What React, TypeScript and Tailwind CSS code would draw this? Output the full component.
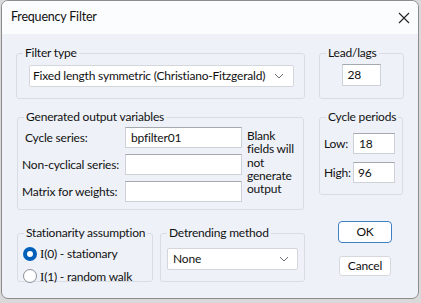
import React from 'react';

const font = "font-['Lato','Liberation_Sans',Arial,sans-serif]";

const Chevron = () => (
  <svg width="10" height="6" viewBox="0 0 10 6" className="shrink-0">
    <path d="M1 1l4 4 4-4" fill="none" stroke="#6b6f75" strokeWidth="1" />
  </svg>
);

const TextBox = ({ value = '', className = '' }: { value?: string; className?: string }) => (
  <div className={`bg-white border border-[#cdd2d8] border-t-[#a4a9b0] flex items-center pl-[4px] whitespace-nowrap ${className}`}>
    {value}
  </div>
);

const Select = ({ value, className = '' }: { value: string; className?: string }) => (
  <div className={`bg-white border border-[#d3d7dc] rounded-[2px] flex items-center justify-between pl-[3px] pr-[5px] whitespace-nowrap ${className}`}>
    <span>{value}</span>
    <Chevron />
  </div>
);

const Group = ({ title, className = '', children }: { title: string; className?: string; children: React.ReactNode }) => (
  <fieldset className={`border border-[#d8dde4] rounded-[3px] pl-[6px] ${className}`}>
    <legend className="px-[2px] leading-[16px] whitespace-nowrap">{title}</legend>
    {children}
  </fieldset>
);

export default function App() {
  return (
    <div className={`w-[421px] h-[303px] bg-[#d9d9d9] pl-[1px] pr-[2px] pb-[4px] ${font} text-[12px] tracking-[-0.2px] text-[#111]`}>
      <div className="w-full h-full flex flex-col rounded-[7px] border border-[#8c8c8c] overflow-hidden bg-[#eef2f8]">
        {/* title bar */}
        <div className="h-[33px] bg-[#fbfcfd] flex items-center justify-between pl-[9px] pr-[8px] shrink-0">
          <span className="text-[12.5px]">Frequency Filter</span>
          <svg width="12" height="12" viewBox="0 0 12 12">
            <path d="M1 1l10 10M11 1L1 11" stroke="#222" strokeWidth="1.1" />
          </svg>
        </div>

        <div className="flex-1 pl-[14px] pt-[11px] flex flex-col">
          {/* row 1 */}
          <div className="flex gap-[14px]">
            <Group title="Filter type" className="w-[289px] h-[54px]">
              <Select value="Fixed length symmetric (Christiano-Fitzgerald)" className="mt-[4px] ml-[6px] w-[265px] h-[22px] pl-[3px] pr-[9px]" />
            </Group>
            <Group title="Lead/lags" className="w-[85px] h-[54px]">
              <div className="flex justify-center pr-[7px] mt-[3px]">
                <TextBox value="28" className="w-[39px] h-[22px] pl-[5px]" />
              </div>
            </Group>
          </div>

          {/* row 2 */}
          <div className="flex gap-[15px] mt-[10px] ml-[1px]">
            <Group title="Generated output variables" className="w-[287px] h-[101px]">
              <div className="flex mt-[2px]">
                <div className="flex flex-col gap-[6px] w-[101px] whitespace-nowrap">
                  <div className="h-[21px] flex items-center pl-[1px]">Cycle series:</div>
                  <div className="h-[21px] flex items-center -ml-[2px]">Non-cyclical series:</div>
                  <div className="h-[21px] flex items-center -ml-[2px]">Matrix for weights:</div>
                </div>
                <div className="flex flex-col gap-[6px]">
                  <TextBox value="bpfilter01" className="w-[117px] h-[21px] pl-[5px]" />
                  <TextBox className="w-[117px] h-[21px]" />
                  <TextBox className="w-[117px] h-[21px]" />
                </div>
                <div className="ml-[5px] mt-[2px] leading-[13.3px] w-[50px]">
                  Blank fields will not generate output
                </div>
              </div>
            </Group>
            <Group title="Cycle periods" className="w-[84px] h-[86px] self-start">
              <div className="flex flex-col gap-[8px] mt-[8px]">
                <div className="flex items-center justify-between pr-[7px]">
                  <span className="-ml-[2px]">Low:</span>
                  <TextBox value="18" className="w-[42px] h-[21px] pl-[5px]" />
                </div>
                <div className="flex items-center justify-between pr-[7px]">
                  <span className="-ml-[2px]">High:</span>
                  <TextBox value="96" className="w-[42px] h-[21px] pl-[4px]" />
                </div>
              </div>
            </Group>
          </div>

          {/* row 3 */}
          <div className="flex mt-[15px] ml-[1px]">
            <Group title="Stationarity assumption" className="w-[136px] h-[57px]">
              <div className="flex flex-col gap-[3px] -ml-[1px] mt-[3px] whitespace-nowrap">
                <div className="flex items-center gap-[3px]">
                  <span className="w-[14px] h-[14px] rounded-full bg-[#005fb8] flex items-center justify-center">
                    <span className="w-[6px] h-[6px] rounded-full bg-white" />
                  </span>
                  <span><span className="font-['Liberation_Serif',serif] text-[13px]">I</span>(0) - stationary</span>
                </div>
                <div className="flex items-center gap-[3px]">
                  <span className="w-[14px] h-[14px] rounded-full bg-white border border-[#8a8f96]" />
                  <span><span className="font-['Liberation_Serif',serif] text-[13px]">I</span>(1) - random walk</span>
                </div>
              </div>
            </Group>
            <Group title="Detrending method" className="w-[145px] h-[57px] ml-[7px] pl-[5px]">
              <Select value="None" className="mt-[7px] w-[131px] h-[22px] pl-[5px] pr-[8px]" />
            </Group>
            <div className="flex flex-col items-center ml-[33px] -mt-[4px] gap-[13px]">
              <div className="w-[54px] h-[22px] bg-white border-[1.5px] border-[#3f7fc4] rounded-[4px] flex items-center justify-center">OK</div>
              <div className="w-[52px] h-[20px] bg-white border border-[#d5d9de] rounded-[3px] flex items-center justify-center">Cancel</div>
            </div>
          </div>
        </div>
      </div>
    </div>
  );
}
